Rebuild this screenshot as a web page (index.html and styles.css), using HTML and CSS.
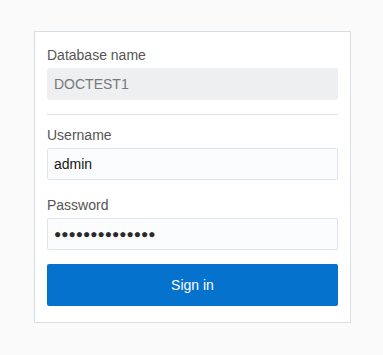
FILE: index.html
```html
<!DOCTYPE html>
<html>
<head>
<meta charset="utf-8">
<link rel="stylesheet" href="styles.css">
</head>
<body>
<div class="page">
  <form class="card">
    <div class="field">
      <label class="label">Database name</label>
      <div class="input readonly">DOCTEST1</div>
    </div>
    <hr class="sep">
    <div class="field">
      <label class="label">Username</label>
      <div class="input">admin</div>
    </div>
    <div class="field">
      <label class="label">Password</label>
      <div class="input pw">●●●●●●●●●●●●●●</div>
    </div>
    <div class="button">Sign in</div>
  </form>
</div>
</body>
</html>
```
FILE: styles.css
```css
html, body {
  margin: 0;
  padding: 0;
  background: #fafafa;
  font-family: "Liberation Sans", Arial, sans-serif;
}
.page {
  padding: 31px 0 0 34px;
}
.card {
  box-sizing: border-box;
  width: 317px;
  height: 292px;
  background: #fff;
  border: 1px solid #d6dfe6;
  padding: 12px 12px 0 12px;
}
.field {
  display: flex;
  flex-direction: column;
}
.label {
  font-size: 14px;
  color: #555;
  line-height: 18px;
  margin-top: 2px;
  margin-bottom: 4px;
}
.input {
  box-sizing: border-box;
  height: 32px;
  border: 1px solid #dfe4e9;
  border-radius: 2px;
  background: #fbfcfd;
  padding: 0 6px;
  font-size: 14px;
  color: #161513;
  line-height: 30px;
}
.input.readonly {
  background: #eeeff1;
  border-color: #eeeff1;
  color: #777;
}
.input.pw {
  font-size: 12px;
  color: #2a2a2a;
}
.sep {
  border: 0;
  border-top: 1px solid #d6dfe6;
  margin: 14px 0 9px 0;
  height: 0;
}
.field + .field {
  margin-top: 14px;
}
.button {
  margin-top: 14px;
  height: 42px;
  background: #0572ce;
  border-radius: 2px;
  color: #fff;
  font-size: 14px;
  line-height: 42px;
  text-align: center;
}
```
